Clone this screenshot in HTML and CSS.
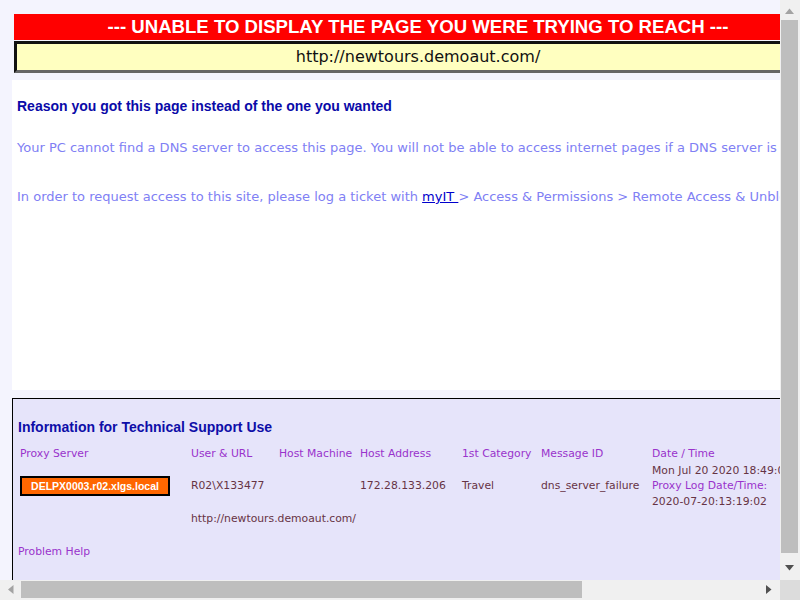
FILE: index.html
```html
<!DOCTYPE html>
<html>
<head>
<meta charset="utf-8">
<title>Unable to display page</title>
<link rel="stylesheet" href="styles.css">
</head>
<body>
<div class="page">
  <div class="top">
    <div class="banner">--- UNABLE TO DISPLAY THE PAGE YOU WERE TRYING TO REACH ---</div>
    <div class="urlbox">http://newtours.demoaut.com/</div>
  </div>

  <div class="main">
    <h2 class="reason-title">Reason you got this page instead of the one you wanted</h2>
    <p class="reason">Your PC cannot find a DNS server to access this page. You will not be able to access internet pages if a DNS server is not available.</p>
    <p class="reason">In order to request access to this site, please log a ticket with <a href="#" class="link">myIT </a> &gt; Access &amp; Permissions &gt; Remote Access &amp; Unblock Websites.</p>
  </div>

  <div class="info">
    <h3 class="info-title">Information for Technical Support Use</h3>
    <table class="tech">
      <colgroup>
        <col class="c1"><col class="c2"><col class="c3"><col class="c4"><col class="c5"><col class="c6"><col class="c7">
      </colgroup>
      <tr class="head">
        <td>Proxy Server</td>
        <td>User &amp; URL</td>
        <td>Host Machine</td>
        <td>Host Address</td>
        <td>1st Category</td>
        <td>Message ID</td>
        <td>Date / Time</td>
      </tr>
      <tr class="vals">
        <td><span class="proxy">DELPX0003.r02.xlgs.local</span></td>
        <td>R02\X133477</td>
        <td></td>
        <td>172.28.133.206</td>
        <td>Travel</td>
        <td>dns_server_failure</td>
        <td class="date">Mon Jul 20 2020 18:49:02 GMT+0530<br><span class="lbl">Proxy Log Date/Time:</span><br>2020-07-20:13:19:02</td>
      </tr>
      <tr class="vals url-row">
        <td></td>
        <td colspan="6">http://newtours.demoaut.com/</td>
      </tr>
    </table>
    <a href="#" class="help">Problem Help</a>
  </div>
</div>

<div class="vscroll">
  <svg class="sbtn" width="20" height="20" viewBox="0 0 20 20"><polygon points="5,14 14,14 9.5,8.5" fill="#a3a3a3"/></svg>
  <div class="vtrack"><div class="vthumb"></div></div>
  <svg class="sbtn" width="20" height="20" viewBox="0 0 20 20"><polygon points="5,5 14,5 9.5,10.5" fill="#505050"/></svg>
</div>
<div class="hscroll">
  <svg class="sbtn" width="20" height="20" viewBox="0 0 20 20"><polygon points="13.5,5 13.5,14 8,9.5" fill="#a3a3a3"/></svg>
  <div class="htrack"><div class="hthumb"></div></div>
  <svg class="sbtn" width="20" height="20" viewBox="0 0 20 20"><polygon points="6,5 6,14 11.5,9.5" fill="#505050"/></svg>
</div>
<div class="corner"></div>
</body>
</html>
```

FILE: styles.css
```css
html, body {
  margin: 0;
  padding: 0;
}
body {
  background: #f4f4fe;
  font-family: "DejaVu Sans", Verdana, sans-serif;
  overflow: hidden;
  height: 600px;
}
.page {
  width: 1003px;
  padding: 14px 12px 6px 12px;
}
.top {
  width: 808px;
  margin-left: 2px;
}
.banner {
  background: #ff0000;
  color: #ffffff;
  font-family: "Liberation Sans", Arial, sans-serif;
  font-weight: bold;
  font-size: 18.6px;
  line-height: 26px;
  text-align: center;
  white-space: nowrap;
}
.urlbox {
  margin-top: 1px;
  background: #ffffc0;
  border-style: solid;
  border-width: 3px;
  border-color: #111111 #666666 #666666 #111111;
  color: #111111;
  font-size: 16px;
  line-height: 26px;
  text-align: center;
}
.main {
  margin-top: 7px;
  background: #ffffff;
  height: 310px;
  padding: 0 5px;
  overflow: hidden;
}
.reason-title {
  margin: 18px 0 0 0;
  font-family: "Liberation Sans", Arial, sans-serif;
  font-size: 14px;
  line-height: 17px;
  color: #0a0aa8;
  font-weight: bold;
}
.reason {
  margin: 24px 0 0 0;
  font-size: 13px;
  line-height: 17px;
  color: #8080f4;
  white-space: nowrap;
}
.reason + .reason {
  margin-top: 32px;
}
.link {
  color: #0000cc;
  text-decoration: underline;
}
.info {
  margin-top: 8px;
  background: #e6e4fa;
  border-top: 1px solid #000000;
  border-left: 1px solid #000000;
  padding: 20px 4px 24px 5px;
}
.info-title {
  margin: 0 0 9px 0;
  font-family: "Liberation Sans", Arial, sans-serif;
  font-size: 14px;
  line-height: 17px;
  color: #0e0ea8;
  font-weight: bold;
}
.tech {
  border-collapse: collapse;
  table-layout: fixed;
  width: 900px;
  font-size: 10.8px;
  color: #663344;
}
.tech td {
  padding: 1px 2px;
  vertical-align: middle;
  white-space: nowrap;
  line-height: 15.5px;
}
.c1 { width: 171px; }
.c2 { width: 88px; }
.c3 { width: 81px; }
.c4 { width: 102px; }
.c5 { width: 79px; }
.c6 { width: 111px; }
.c7 { width: 268px; }
.head td {
  color: #9933cc;
  padding-bottom: 0;
}
.vals td {
  padding-top: 1px;
}
.url-row td {
  padding-top: 1px;
}
.proxy {
  display: inline-block;
  background: #ff6600;
  color: #ffffff;
  font-family: "Liberation Sans", Arial, sans-serif;
  font-weight: bold;
  font-size: 10.5px;
  border: 2px solid #000000;
  width: 146px;
  text-align: center;
  line-height: 16px;
}
.lbl {
  color: #9933cc;
}
.help {
  display: block;
  margin-top: 16px;
  font-size: 10.8px;
  line-height: 15px;
  color: #9933cc;
  text-decoration: none;
}

.vscroll {
  position: fixed;
  top: 0;
  right: 0;
  width: 20px;
  height: 580px;
  background: #f0f0f0;
  display: flex;
  flex-direction: column;
}
.vtrack {
  flex: 1;
  padding: 0 2px 0 1px;
}
.vthumb {
  height: 533px;
  background: #bebebe;
}
.hscroll {
  position: fixed;
  left: 0;
  bottom: 0;
  width: 780px;
  height: 20px;
  background: #f0f0f0;
  display: flex;
}
.htrack {
  flex: 1;
  padding: 1px 0 2px 1px;
}
.hthumb {
  width: 561px;
  height: 17px;
  background: #bebebe;
}
.sbtn {
  display: block;
  flex: none;
}
.corner {
  position: fixed;
  right: 0;
  bottom: 0;
  width: 20px;
  height: 20px;
  background: #dcdcdc;
}
```
